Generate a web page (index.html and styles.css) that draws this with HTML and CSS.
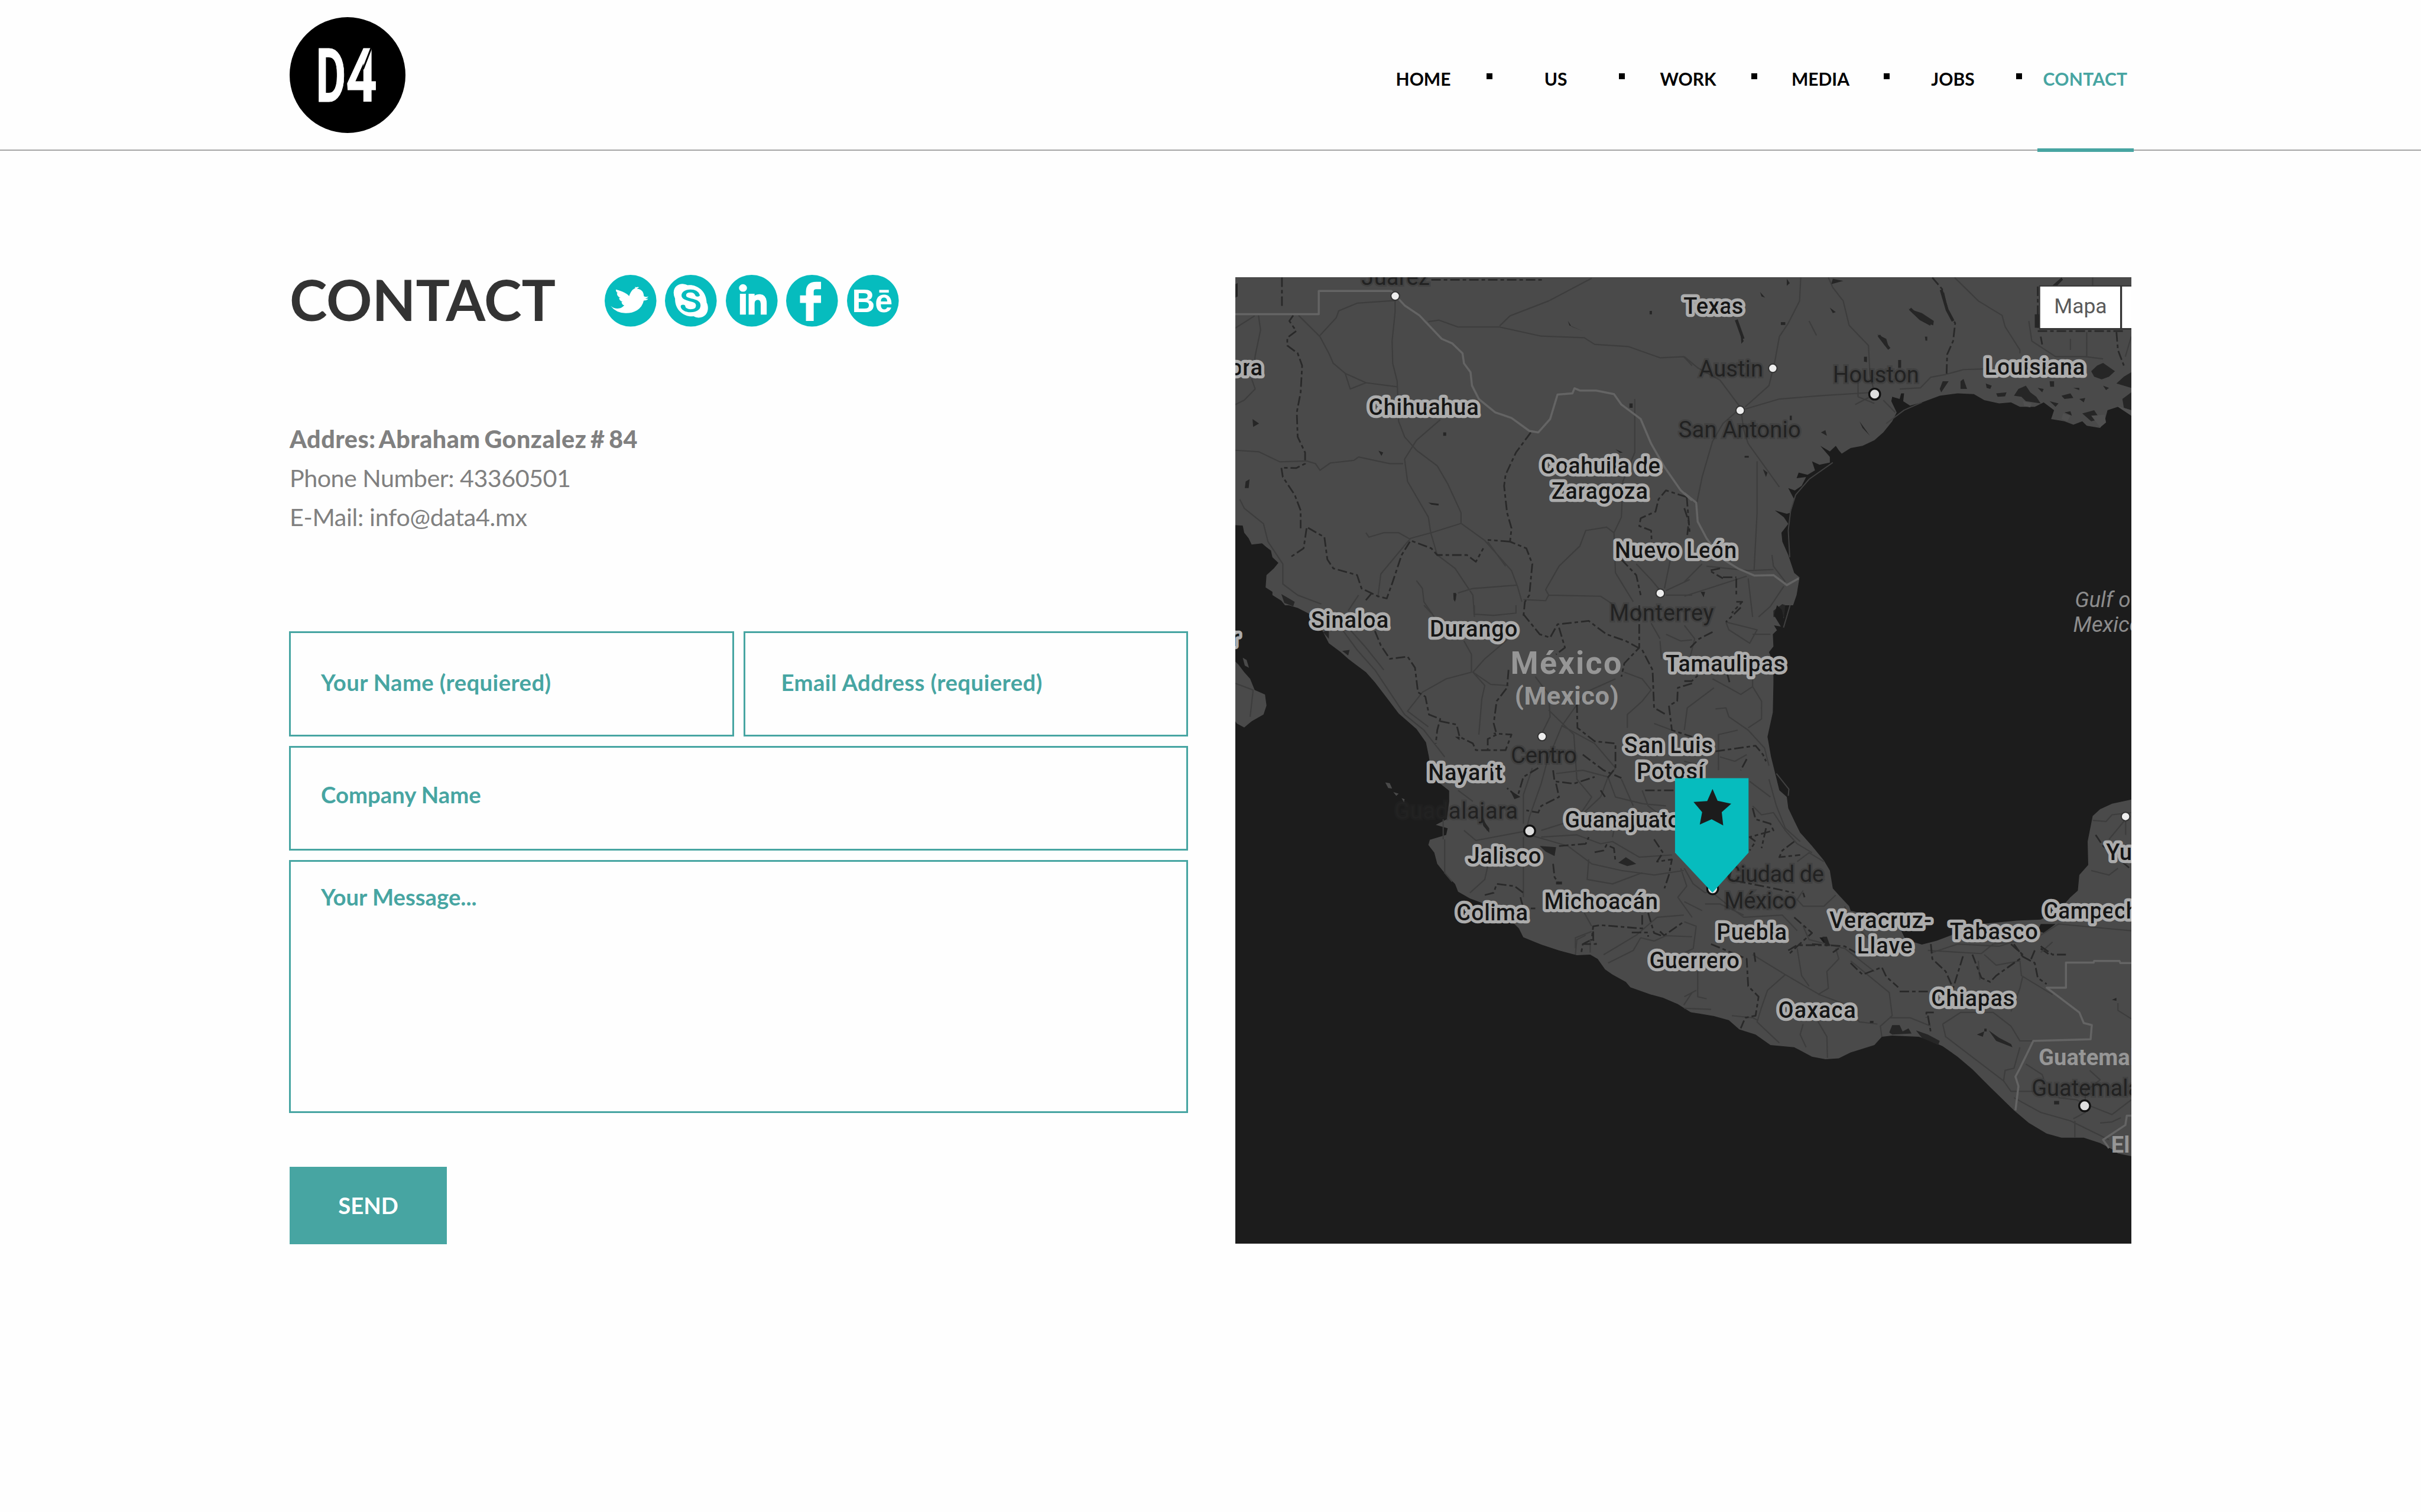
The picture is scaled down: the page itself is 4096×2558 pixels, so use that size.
FILE: index.html
```html
<!DOCTYPE html>
<html lang="en">
<head>
<meta charset="utf-8">
<title>D4 – Contact</title>
<link rel="stylesheet" href="styles.css">
</head>
<body>
<header class="header">
  <a class="logo" href="#" aria-label="D4">
    <svg class="logo-svg" viewBox="91 131 584 897" preserveAspectRatio="none">
      <ellipse cx="383" cy="579.5" rx="292" ry="448.5" fill="#000"/>
      <text class="logo-text" x="224" y="785" textLength="150" lengthAdjust="spacingAndGlyphs">D</text>
      <text class="logo-text" x="375" y="785" textLength="157" lengthAdjust="spacingAndGlyphs">4</text>
      <path d="M505 360L461 535" stroke="#000" stroke-width="9" fill="none"/>
    </svg>
  </a>
  <nav class="nav">
    <a class="nav-item" href="#">HOME</a><i class="nav-dot"></i>
    <a class="nav-item" href="#">US</a><i class="nav-dot"></i>
    <a class="nav-item" href="#">WORK</a><i class="nav-dot"></i>
    <a class="nav-item" href="#">MEDIA</a><i class="nav-dot"></i>
    <a class="nav-item" href="#">JOBS</a><i class="nav-dot"></i>
    <a class="nav-item active" href="#">CONTACT</a>
  </nav>
</header>
<main class="main">
  <section class="contact">
    <div class="title-row">
      <h1 class="title">CONTACT</h1>
      <div class="social">
        <svg class="social-icon" viewBox="35 57 261 399" preserveAspectRatio="none">
          <ellipse class="disc" cx="165.500" cy="256.500" rx="130.500" ry="199.500"/>
          <path class="mark" d="M65 296Q84 320 106 316Q124 313 134 291Q122 290 120 264L127 263Q108 260 108 234L116 236Q96 222 97 196L103 200Q90 186 92 170Q128 186 146 204Q156 214 158 221Q166 188 176 172Q182 164 190 158L187 150L195 153L205 149L203 153L209 152Q206 158 197 164Q218 166 227 188Q232 202 233 222Q244 230 256 223Q250 236 239 240Q248 242 255 241Q248 254 232 255Q226 302 198 330Q172 353 140 352Q92 350 65 296Z"/>
        </svg>
        <svg class="social-icon" viewBox="341 57 261 399" preserveAspectRatio="none">
          <ellipse class="disc" cx="471.500" cy="256.500" rx="130.500" ry="199.500"/>
          <path class="mark" d="M385 190C386 150 406 126 430 126Q444 127 456 137C500 128 550 180 551 270C566 310 558 386 510 387Q496 386 485 376C440 386 390 330 392 240Q384 216 385 190Z"/>
          <path d="M505 213C500 192 490 181 470 181C448 181 436 196 436 215C436 236 452 243 470 250C492 257 509 266 509 293C509 320 492 334 470 334C448 334 432 316 432 299" fill="none" stroke="#06bcbe" stroke-width="23" stroke-linecap="round"/>
        </svg>
        <svg class="social-icon" viewBox="647 57 261 399" preserveAspectRatio="none">
          <ellipse class="disc" cx="777.500" cy="256.500" rx="130.500" ry="199.500"/>
          <ellipse class="mark" cx="733.500" cy="158" rx="20" ry="29"/>
          <path class="mark" d="M718 203H748V363H718ZM762 203H792V218Q800 205 820 206Q853 210 853 275V363H823V280Q822 248 808 249Q792 250 792 280V363H762Z"/>
        </svg>
        <svg class="social-icon" viewBox="953 57 261 399" preserveAspectRatio="none">
          <ellipse class="disc" cx="1083.500" cy="256.500" rx="130.500" ry="199.500"/>
          <path class="mark" d="M1129 111V168H1104Q1092 168 1092 186V215H1129V273H1092V412H1053V273H1023V215H1053V184Q1054 112 1105 111Z"/>
        </svg>
        <svg class="social-icon" viewBox="1259 57 261 399" preserveAspectRatio="none">
          <ellipse class="disc" cx="1389.500" cy="256.500" rx="130.500" ry="199.500"/>
          <text class="be-text" x="1284" y="344" textLength="205" lengthAdjust="spacingAndGlyphs">Bē</text>
        </svg>
      </div>
    </div>
    <address class="address">
      <strong class="address-strong">Addres: Abraham Gonzalez # 84</strong>
      <span class="address-phone">Phone Number: 43360501</span>
      <span class="address-mail">E-Mail: info@data4.mx</span>
    </address>
    <form class="form">
      <div class="form-row">
        <div class="field field-name">Your Name (requiered)</div>
        <div class="field field-email">Email Address (requiered)</div>
      </div>
      <div class="field field-company">Company Name</div>
      <div class="field field-message">Your Message...</div>
      <button class="send" type="button">SEND</button>
    </form>
  </section>
  <section class="map">
    <svg class="map-svg" viewBox="3183 715 2309 2489" preserveAspectRatio="none">
      <rect x="3183" y="715" width="2309" height="2489" fill="#4a4a4a"/>
      <!-- north-west -->
      <g transform="translate(3160 690) scale(.7653 .574)">
        <path class="water" d="M20 1155L55 1158 60 1190 75 1215 85 1243 120 1238 135 1255 150 1270 155 1300 175 1325 160 1350 135 1380 132 1435 155 1455 155 1470 185 1495 200 1520 240 1545 280 1575H20Z"/>
        <path class="road" d="M30 272L95 217M108 215L115 280 97 395 95 420M85 500L97 545 60 595 30 615M243 215L315 310 345 385 360 430 400 475 470 517 575 535M315 305L370 225 378 195 440 160 568 148 568 200 558 330 560 430 575 510 580 690 600 760 640 820 710 890 745 970 790 1100 790 1148M400 475L417 545 470 517M720 683L640 775 600 860 610 960 680 1120 688 1190 710 1290 770 1350 830 1470 835 1568M30 820L110 827 180 872 270 868M270 868L300 880 315 910 350 877 430 865 445 850 550 880 595 880M680 243L715 236 780 267 920 267 1060 308 1205 315 1240 345 1355 355 1460 405 1540 400 1568 440M920 262L955 217 1085 150 1230 48M790 1148L690 1190 620 1215 520 1375 510 1480M790 1148L870 1225 960 1360 980 1430 995 1500M470 1190L480 1210 530 1190 580 1190 620 1220M780 1460L830 1440 980 1425M1375 590V830L1335 960 1330 1120 1305 1190 1310 1370 1370 1500M1305 1190L1280 1165 1210 1180 1190 1250 1120 1340 1075 1445 1085 1470 1260 1475 1300 1510M640 1405L660 1440 665 1500 700 1568M45 1040L60 1080 125 1150 140 1230 190 1330 190 1420 240 1470 320 1510M880 1230L940 1340M1380 1330L1430 1400 1461 1450M1495 1310L1475 1440M1480 1470H1568M1480 1450L1560 1400M410 1540L445 1470M1000 1490L1075 1495 1085 1470"/>
        <path class="state" d="M187 45V185M225 215L212 240 235 285 205 315 205 350 240 385 255 440 250 560 237 650 240 760 265 830 265 880 235 900 185 898 190 940 230 1020 250 1090 250 1170M1025 740L975 830 940 930 935 980 945 1100 960 1170 955 1230 1010 1260 1030 1330 1020 1470 1005 1500 1000 1568M955 1230L880 1222M275 1168L330 1210 340 1310 360 1350 440 1380 455 1440 510 1475 540 1485 560 1410 590 1290 620 1225 690 1260 710 1290 810 1290 840 1320 865 1260M270 1170L260 1260 215 1300M690 55H1065M1550 1030L1480 1000 1455 1040 1445 1095 1395 1125 1390 1160 1430 1180 1432 1230M1330 1310L1380 1380 1395 1470M1550 1030L1560 1190M490 1460L465 1500M770 1460V1490"/>
        <path class="border" d="M30 209H311V105H555L600 170 650 215 725 320 760 340 795 385 800 430 822 470 827 530 850 590 905 650 960 675 1020 733 1050 740 1090 680 1115 570 1165 565 1172 542 1190 552 1245 552 1305 568 1330 615 1395 680 1430 790 1475 895 1530 1000 1568 1045"/>
        <path class="lake" d="M62 990L65 960 78 950 75 990ZM88 680L110 700 90 715ZM512 822L528 830 522 845ZM730 740H740V755H730ZM680 1055L715 1060 714 1068 690 1064ZM1357 610H1368V630H1357ZM1150 240L1162 265 1200 285 1155 260ZM764 1460L775 1465 770 1500 765 1490ZM185 1465L230 1500 225 1520 195 1505ZM1425 195H1433V210H1425ZM30 75L38 70V130L30 135ZM1310 815L1335 830 1325 832Z"/>
      </g>
      <!-- north-east -->
      <g transform="translate(4340 690) scale(.7653 .574)">
        <path class="water" d="M340 1575L350 1540 365 1520 378 1470 388 1390 370 1370 350 1290 330 1230 327 1190 350 1150 335 1120 305 1090 345 1105 358 1100 370 1040 350 990 372 1000 395 980 410 940 378 945 385 920 415 930 440 910 430 870 455 885 490 875 490 850 458 800 490 825 510 800 520 820 530 835 560 810 600 800 640 775 670 740 700 690 715 650 697 600 700 580 725 590 730 565 740 565 737 600 760 620 800 605 860 575 920 565 975 568 1010 595 1060 610 1100 605 1130 625 1180 625 1210 605 1245 640 1235 680 1280 690 1310 705 1340 690 1355 710 1400 720 1415 690 1425 640 1460 625 1505 665V1575Z"/>
        <path class="road" d="M392 45L388 150 350 250 320 310 305 420 285 530 205 625M485 45L500 90 535 150 555 260 620 350 625 480 640 560 460 575 320 590 205 635M910 45L990 150 1070 215 1080 265 1130 370 1130 385M0 400L45 450 120 505 190 630 130 700 95 780 60 940 40 1070M190 630L200 730 215 790 320 985M245 870V1100L235 1355M725 545L795 540 830 492 880 480 940 458 1010 455M585 500V580L640 610M670 595L710 650M1160 240L1170 330 1250 400 1350 400 1410 410M1355 290V400M1300 320V370M1505 310L1485 400M295 1290L300 1340 340 1410M0 1475L210 1385M215 1395L230 1568M335 1430L290 1520 250 1568M0 1410L60 1330M75 1340L215 1360 300 1355M575 615L640 570M420 240L445 305M1375 45V80"/>
        <path class="state" d="M835 45L870 100 885 190 912 250 905 330 885 390 883 480M1190 285H1480M1455 290L1460 370 1480 440M0 1080L15 1140 10 1200M120 1350L85 1360 130 1395M175 1395V1470M130 1390H175M175 1500H195L160 1550M1190 85V270M1200 310L1205 345"/>
        <path class="river" d="M865 100L885 190 905 240M760 185L795 230 830 255M655 305L690 365M175 235L198 320M725 415V450"/>
        <path class="border" d="M0 1012L40 1055 45 1140 75 1215 120 1300 180 1350 235 1382 300 1380 345 1425 385 1395"/>
        <path class="coast" d="M355 1300L350 1180 358 1090 375 1020 420 950 500 875M680 700L740 640 800 605"/>
        <path class="lake" d="M1370 465L1390 440 1410 428 1450 465 1430 490 1405 502 1380 490ZM1455 520L1480 490 1505 470V540L1480 530ZM1475 590L1505 560V640L1480 630ZM1110 575L1125 545 1150 530 1165 560 1185 580 1200 610 1150 600 1135 580ZM1050 565L1085 560 1080 578 1055 580ZM1015 520L1035 530 1030 545 1018 540ZM1230 510H1245V535H1232ZM1270 575L1300 565 1310 585 1280 590ZM1230 600L1260 610 1250 625ZM1330 590L1350 585 1345 605ZM1340 655L1380 640 1400 680 1370 690ZM1280 650L1300 645 1305 665ZM860 545L870 510 890 510 865 560ZM930 510L940 500 952 545 930 545ZM755 185L800 205 840 240 838 260 800 240ZM650 300L680 320 690 365 675 350ZM605 400H615V425L605 422ZM190 300L200 330 192 342ZM490 180L510 200 500 205ZM325 245H340V258H325ZM500 50L535 60 495 75ZM345 50L355 70 345 82ZM255 110L272 135 260 130ZM810 310H818V328H812ZM460 740L475 730 480 755ZM355 665H362V685H355ZM265 905L280 920 275 940ZM203 845H217V853H203ZM590 690L625 755 600 720ZM1240 80L1270 45 1275 55 1255 82ZM1180 210H1195V270H1180ZM300 1568L300 1540 330 1510 350 1520 345 1568ZM55 1455H70L65 1480ZM1410 530L1430 540 1420 550ZM1310 540H1330V550ZM1190 540L1210 545 1205 560Z"/>
        <path d="M1140 600L1170 610 1165 628 1145 622ZM1275 655L1300 665 1290 690 1270 680ZM1370 665L1415 660 1420 695 1400 718ZM1455 620L1505 640 1505 665Z" fill="#505050"/>
      </g>
      <!-- west -->
      <g transform="translate(3160 1560) scale(.7653 .574)">
        <path class="water" d="M20 0H210L240 12 285 42 320 105 345 170 385 210 410 240 470 300 500 345 540 415 580 485 640 555 672 615 682 680 690 760 715 795 750 832 750 880 742 960 705 985 745 1000 740 1030 685 1052 680 1075 700 1110 710 1160 740 1210 770 1250 780 1285 820 1315 860 1335 900 1380 970 1430 985 1450 1000 1490 1050 1520 1120 1550 1180 1575H20Z"/>
        <path fill="#4a4a4a" d="M20 240L40 265 60 300 80 330 95 380 130 400 135 450 125 490 85 520 60 548 35 530 20 500ZM55 235L68 245 76 280 62 270ZM535 795L550 798 558 822 545 820ZM562 838L580 845 572 855ZM590 865L600 870 598 885Z"/>
        <path class="road" d="M385 100L440 200 500 290 560 410 600 490 665 560 700 620 735 680M410 100L470 190 530 290M800 160L825 220 825 300 740 330 660 390 610 475 680 545M945 155L870 240 830 300 870 360 860 420 850 580M830 300L890 355 950 360M665 0L690 35M835 0V40L900 45 975 35V0M1040 320L1085 400 1090 500 1060 580M1310 330L1210 390 1130 540 1080 700 1060 800 1020 950 1010 1010M1085 470L1170 580 1180 780 1230 860 1180 960 1060 1010M1130 540L1240 620 1310 730 1285 770 1200 740 1110 755M1285 770L1310 860 1400 890 1480 900M1285 770L1260 860 1180 960M1350 550V490L1400 430 1430 380 1400 330 1340 300M1020 1030L1150 1080 1230 1160 1330 1190 1440 1210 1540 1190M1000 1040L1000 1200 1000 1310M1020 1010L900 1040 840 1055 800 1010M880 1170L870 1230 820 1290M735 1050V1200L760 1240M1060 1040L1180 1030 1260 1070 1300 1060 1390 1130 1500 1120M1220 1140L1215 1230 1300 1250 1400 1200M1400 830L1420 900 1480 960M1030 730L1000 850 1000 980M780 830L830 880M730 960L730 1050M1205 1380L1230 1440M1210 1480L1180 1500 1175 1568M1270 1568L1380 1480 1450 1400 1540 1390M1480 130L1530 160 1568 155M1460 160L1465 240M30 350L90 380 80 500M1430 80L1460 150M1440 530L1500 560M1330 780L1370 900M1300 1040L1310 980 1390 920M1530 1180L1550 1260 1520 1310 1568 1400"/>
        <path class="state" d="M500 115L520 180 550 240 610 230 635 280 645 390 670 410 682 490 720 510 710 560 705 620M720 520L775 535 785 590 830 620 840 650 940 650 960 580 900 575M950 290L945 370 910 430 900 530 910 580 880 600 880 650M1000 40L1055 130 1090 145 1115 85 1220 70 1280 130 1345 160 1400 200 1435 290 1440 460 1480 490M1120 100L1140 190 1110 220M1390 0V190L1340 260 1330 320M1180 440L1182 550 1240 610 1310 620V730L1280 780M1200 670L1270 740 1330 775M1050 730L1000 770 980 860 945 820M1100 740L1105 790 1170 800 1240 770M1110 800L1120 860 1060 900 1050 930 1010 920M1568 350L1520 370 1518 430 1490 450 1500 560 1568 590M870 1300L900 1290 910 1250 970 1260 1000 1290M990 1310L1000 1360 1040 1360M1100 1160L1105 1220 1120 1250M1120 1080L1210 1070 1220 1040M1240 1108L1270 1100 1280 1075 1305 1090 1310 1150M1440 1050L1470 1110 1450 1150 1500 1140 1490 1210 1475 1270M1400 1390L1400 1450 1260 1435 1235 1440 1230 1500 1200 1520M1420 1380L1440 1470 1470 1485 1540 1420M1410 830L1510 830M1260 830L1275 860M860 950L880 1010"/>
        <path class="lake" d="M1055 1080L1110 1085 1105 1125 1075 1105ZM1320 1155L1345 1130 1380 1160 1350 1170ZM325 120L345 110 345 150ZM390 205L415 200 410 225ZM1110 1240H1130V1252H1110ZM770 590H785V605ZM860 955L885 1000 885 1020 865 990ZM955 830L990 860 970 870Z"/>
      </g>
      <!-- east -->
      <g transform="translate(4340 1560) scale(.7653 .574)">
        <path class="water" d="M340 0H1505V872L1440 890 1400 915 1375 945 1358 1060 1360 1165 1330 1210 1325 1280 1300 1310 1260 1370 1200 1410 1120 1415 920 1440 900 1480 850 1505 800 1522 745 1500 730 1460 680 1410 560 1370 555 1350 520 1300 500 1270 490 1190 470 1145 430 1080 390 1020 375 980 350 910 345 860 320 830 305 750 292 680 280 590 298 480 300 350 300 260 285 210 300 185 298 130 312 112 302 90 325 95 302 45 312 0 328 20 335 60Z"/>
        <path class="coast" d="M310 755L352 825 350 855M356 0L345 50 334 100"/>
        <path class="water" d="M1190 1460L1200 1430 1250 1430 1210 1470ZM455 1490L475 1490 490 1525 478 1530Z"/>
        <path class="road" d="M140 75L150 110 220 170 245 110 140 75M0 90L35 150 20 230M95 330L150 370 190 400 230 365 260 430 260 510 215 550M100 370L10 460 0 560M230 300L230 365M105 465L140 460 150 500 215 560 270 640 285 720M115 740V580L180 560M120 680L170 700 210 670M285 780L310 900 340 1000 390 1060M220 790L290 860M230 900L260 940 300 930 340 1010 380 1070 430 1110M380 1150L420 1110 470 1150M0 1180L30 1250 70 1290 95 1280M95 1290L170 1370 200 1400 330 1390 380 1460M70 1340H120L200 1390M400 1280L380 1320 400 1350 470 1350 510 1300M400 1440L420 1500 540 1540M1375 965L1420 970 1440 940 1505 930M1486 960L1430 1050M1370 1190L1430 1210 1460 1180M1200 1480L1260 1430 1505 1460M830 1560L920 1520 1060 1530 1130 1500M0 1420L40 1440 30 1540 0 1560M540 1350L560 1420 680 1568M1486 960V1030M0 700L60 720M230 130L290 130M0 1330L60 1370"/>
        <path class="state" d="M190 10L140 75M95 120L50 150 20 190M0 340H25L45 315M145 310L152 345M105 655L240 630 265 670 275 700M210 690L190 740M230 910L240 960 290 980 300 1010 220 1040 240 1060 220 1100M275 1000L260 1090M370 1060L330 1100 320 1130 390 1120M160 1180L150 1230 300 1270 370 1290M400 1290L405 1310M370 1400L430 1470 380 1530 350 1568M430 1520L540 1530 590 1568M1100 1520L1140 1568M1385 1030L1410 1080 1500 1180M1200 1540L1230 1568M620 1400H700"/>
      </g>
      <!-- south -->
      <g transform="translate(3160 2400) scale(.7653 .542)">
        <path class="water" d="M20 0H988L995 25 1060 62 1120 90 1180 113 1225 110 1250 130 1275 180 1300 205 1345 240 1360 265 1430 300 1470 315 1520 345 1568 388V1490H20Z"/>
        <path class="road" d="M1175 80V30L1230 0M1285 150L1370 90 1395 30 1440 45 1480 20 1568 25M1568 290L1540 350M1225 100V40"/>
        <path class="state" d="M1235 0V40L1245 60 1200 60 1195 100M1365 5H1420V25M1460 0L1475 20"/>
      </g>
      <g transform="translate(4340 2400) scale(.7653 .542)">
        <path class="water" d="M-5 378L50 390 100 402 150 422 185 465 240 490 290 540 370 550 430 595 475 607 520 603 560 575 640 540 665 500 700 495 790 500 830 520 870 545 920 595 970 655 1030 740 1110 850 1160 910 1220 960 1270 980 1345 980 1400 1005 1440 1035 1460 1055 1505 1068V1490H-5Z"/>
        <path class="road" d="M45 190V310L75 320M230 110L340 205 455 300 530 340 590 430 650 440M340 205L280 280 260 360 245 430 320 530M380 80L395 210 420 260M510 80L520 130 480 190 485 270 450 300M430 380L480 500 482 600M400 440L390 490 410 550M560 140L690 290 700 400 660 450 665 500M690 410L760 410 830 450M870 440L930 385 1040 385 1100 450 1130 520 1180 520M870 440L880 500 1075 710 1100 760H1180M1075 710L1080 660 1110 650 1130 550M820 90L1000 105 1040 60M1010 110L1050 160 1130 140 1135 210 1240 300M1140 210L1130 270 1100 380M995 230L990 140M1150 630L1205 680 1210 700M1110 790L1200 860 1300 900 1430 990M1315 900V980M1365 660L1400 705 1350 760 1350 860 1310 890M1260 790L1320 800 1350 820 1440 870 1505 800M1400 910L1440 905 1470 885M0 365L90 370M0 310L40 280M540 80L640 190M1240 50L1200 100M1040 60L1180 40M1460 340L1460 375 1505 415M160 400L230 410 245 420"/>
        <path class="state" d="M90 60L210 130 215 260 250 310 240 400 205 410 190 460M560 150L600 205 665 170 680 215 720 265M725 285H820M820 400L830 480M840 385H815V410M830 60L835 130 880 190 905 270 940 110M970 110L1000 220 1030 240 1050 210 1140 120 1180 150 1190 220 1220 250M1110 60L1140 120M1200 70L1240 110H1285M350 90L380 65H490M500 100L520 80M235 100L240 150M1180 90L1165 140"/>
        <path class="border" d="M1505 150H1468L1465 140H1380L1378 148H1285V267H1220L1330 385 1345 435 1372 445 1368 512 1175 520 1130 650 1115 690 1125 735 1115 850M1505 875H1490L1485 920 1410 990 1430 1030"/>
        <path class="lake" d="M690 480L700 445 725 445 735 475 755 460 765 485 700 490ZM780 470L820 490 860 520 855 540 800 505ZM985 490L1010 475 1005 500ZM1025 470L1060 505 1100 535 1105 550 1050 520ZM465 25L480 25 490 65 475 60ZM1245 805H1262V822H1245ZM1440 325L1455 315V330ZM625 425H637V435H625ZM1010 462H1018V475H1010Z"/>
      </g>
      <!-- city names -->
      <g class="city">
        <text x="3508" y="735" textLength="176">Juárez</text>
        <text x="4378" y="971" textLength="165">Austin</text>
        <text x="4723" y="986" textLength="222">Houston</text>
        <text x="4325" y="1128" textLength="315">San Antonio</text>
        <text x="4147" y="1600" textLength="269">Monterrey</text>
        <text x="3893" y="1967" textLength="170">Centro</text>
        <text x="3593" y="2110" textLength="318">Guadalajara</text>
        <text x="4447" y="2273" textLength="253">Ciudad de</text>
        <text x="4443" y="2341" textLength="186">México</text>
        <text x="5235" y="2823" textLength="280">Guatemala</text>
      </g>
      <!-- state names -->
      <g class="region" transform="translate(0 2)">
        <text x="4338" y="808" textLength="154">Texas</text>
        <text x="5114" y="964" textLength="258">Louisiana</text>
        <text x="3168" y="966" textLength="85">ora</text>
        <text x="3526" y="1068" textLength="284">Chihuahua</text>
        <text x="3970" y="1219" textLength="308">Coahuila de</text>
        <text x="3998" y="1284" textLength="248">Zaragoza</text>
        <text x="4161" y="1436" textLength="314">Nuevo León</text>
        <text x="3378" y="1615" textLength="200">Sinaloa</text>
        <text x="3684" y="1639" textLength="226">Durango</text>
        <text x="3173" y="1663">r</text>
        <text x="4292" y="1728" textLength="308">Tamaulipas</text>
        <text x="4185" y="1938" textLength="229">San Luis</text>
        <text x="4217" y="2005" textLength="174">Potosí</text>
        <text x="3680" y="2008" textLength="192">Nayarit</text>
        <text x="4032" y="2130" textLength="298">Guanajuato</text>
        <text x="3781" y="2223" textLength="190">Jalisco</text>
        <text x="3979" y="2341" textLength="293">Michoacán</text>
        <text x="3753" y="2370" textLength="184">Colima</text>
        <text x="4423" y="2420" textLength="181">Puebla</text>
        <text x="4714" y="2389" textLength="263">Veracruz-</text>
        <text x="4785" y="2454" textLength="143">Llave</text>
        <text x="5024" y="2418" textLength="227">Tabasco</text>
        <text x="5266" y="2364" textLength="275">Campeche</text>
        <text x="5427" y="2214">Yucatán</text>
        <text x="4250" y="2493" textLength="232">Guerrero</text>
        <text x="4582" y="2620" textLength="200">Oaxaca</text>
        <text x="4976" y="2590" textLength="215">Chiapas</text>
      </g>
      <!-- country and sea names -->
      <g class="country">
        <text class="country-big" x="3892" y="1736" textLength="286">México</text>
        <text class="country-mid" x="3903" y="1815" textLength="268">(Mexico)</text>
        <text x="5253" y="2745" textLength="282">Guatemala</text>
        <text x="5440" y="2970">El</text>
      </g>
      <g class="sea">
        <text x="5346" y="1564">Gulf of</text>
        <text x="5342" y="1629">Mexico</text>
      </g>
      <g class="dot">
        <circle cx="3595" cy="763.500" r="11"/><circle cx="4568" cy="949.500" r="11"/><circle cx="4484" cy="1058" r="11"/>
        <circle cx="4278" cy="1529" r="11"/><circle cx="3973.500" cy="1898" r="11"/><circle cx="5477" cy="2104" r="11"/>
      </g>
      <g class="dot-capital">
        <circle cx="4830.500" cy="1016" r="14"/><circle cx="3941.500" cy="2141" r="14"/><circle cx="5371.500" cy="2849" r="14"/><circle cx="4413" cy="2290" r="14"/>
      </g>
      <!-- map type switch -->
      <rect x="5254" y="736" width="240" height="114" fill="#333"/>
      <rect x="5257" y="739" width="206" height="107" fill="#fff"/>
      <rect x="5468" y="739" width="30" height="107" fill="#fff"/>
      <text class="map-type" x="5293" y="808" textLength="136">Mapa</text>
      <!-- office pin -->
      <path d="M4316 2005H4505.500V2197L4412.500 2300 4316 2197Z" fill="#06bcbe"/>
      <path transform="translate(4340 1560) scale(.7653 .574)" fill="#1c1c1c" d="M95 824L112 877 158 890 126 928 131 988 92 960 52 984 60 928 31 882 77 878Z"/>
    </svg>
  </section>
</main>
</body>
</html>
```
FILE: styles.css
```css
* { box-sizing: border-box; }
body {
  margin: 0;
  background: #fefefe;
  font-family: Lato, "Liberation Sans", sans-serif;
}

/* header */
.header {
  height: 255px;
  padding: 29px 461px 0 490px;
  border-bottom: 2px solid #a4a4a4;
  display: flex;
  justify-content: space-between;
}
.logo { width: 196px; height: 196px; }
.logo-svg { display: block; width: 196px; height: 196px; }
.logo-text {
  font: 700 581px Roboto, sans-serif;
  fill: #fff;
  stroke: #fff;
  stroke-width: 5px;
}
.nav { display: flex; align-items: stretch; }
.nav-item {
  position: relative;
  width: 214px;
  padding-top: 86px;
  font-size: 30px;
  line-height: 36px;
  font-weight: 700;
  text-align: center;
  text-decoration: none;
  color: #000;
}
.nav-dot { width: 10px; height: 10px; margin-top: 95px; background: #000; }
.nav-item.active { color: #47a5a2; letter-spacing: .3px; }
.nav-item.active::after {
  content: "";
  position: absolute;
  left: 26px;
  bottom: -4px;
  width: 163px;
  height: 6px;
  background: #47a5a2;
}

/* page body */
.main {
  display: flex;
  justify-content: space-between;
  padding: 210px 490px 0 489px;
}
.contact { width: 1521px; }
.title-row { display: flex; align-items: flex-start; height: 88px; padding-left: 1px; }
.title {
  width: 533px;
  margin: 0;
  font-size: 96px;
  line-height: 81px;
  font-weight: 700;
  color: #333;
}
.social { display: flex; gap: 14.900px; }
.social-icon { display: block; width: 87.600px; height: 87.600px; }
.disc { fill: #06bcbe; }
.mark { fill: #fff; }
.be-text { font: 700 252px "Liberation Sans", Arial, sans-serif; fill: #fff; }

.address {
  display: flex;
  flex-direction: column;
  margin-top: 156px;
  padding-left: 1px;
  font-size: 41.300px;
  line-height: 66px;
  font-style: normal;
  color: #808080;
}
.address-strong { font-weight: 900; letter-spacing: .5px; word-spacing: -3.600px; }
.address-phone { letter-spacing: -.540px; }
.address-mail { letter-spacing: -.360px; }

/* form */
.form {
  display: flex;
  flex-direction: column;
  gap: 16px;
  margin-top: 161px;
}
.form-row { display: grid; grid-template-columns: 1fr 1fr; gap: 16px; }
.field {
  height: 177.500px;
  padding: 60px 51px 0;
  border: 3px solid #47a5a2;
  font-size: 38.300px;
  line-height: 46px;
  font-weight: 700;
  color: #47a5a2;
}
.field-name { letter-spacing: .370px; }
.field-email { padding-left: 61px; letter-spacing: .420px; }
.field-company { padding-top: 56px; }
.field-message { height: 428px; padding-top: 36px; }
.send {
  width: 266px;
  height: 131px;
  margin: 75px 0 0 1px;
  padding: 0 0 2px;
  border: 0;
  background: #47a5a2;
  font: 700 38.300px Lato, sans-serif;
  color: #fff;
}

/* map */
.map { width: 1516px; height: 1635px; margin-top: 4px; overflow: hidden; }
.map-svg { display: block; width: 1516px; height: 1635px; font: 500 58px Roboto, sans-serif; }
.map-svg path { vector-effect: non-scaling-stroke; }
.water { fill: #1c1c1c; }
.lake { fill: #262626; }
.road, .state, .border, .coast, .river { fill: none; stroke-linejoin: round; }
.road { stroke: #3d3d3d; stroke-width: 2.200px; }
.state { stroke: #292929; stroke-width: 2.800px; stroke-dasharray: 16 5 6 5; }
.border { stroke: #646464; stroke-width: 3.500px; }
.coast { stroke: #404040; stroke-width: 2px; }
.river { stroke: #262626; stroke-width: 5px; }
.city { font-weight: 400; fill: #222; stroke: rgba(40, 40, 40, .25); stroke-width: 9px; paint-order: stroke; }
.region { fill: #161616; stroke: #acacac; stroke-width: 16px; stroke-linejoin: round; paint-order: stroke; }
.country { fill: #969696; font-weight: 700; }
.country-big { font-size: 82px; }
.country-mid { font-size: 66px; }
.sea { font-size: 56px; font-weight: 400; font-style: italic; fill: #8c8c8c; }
.dot { fill: #eee; stroke: #333; stroke-width: 3px; }
.dot-capital { fill: #ddd; stroke: #111; stroke-width: 5px; }
.map-type { font-size: 54px; font-weight: 400; fill: #5a5a5a; }
```
